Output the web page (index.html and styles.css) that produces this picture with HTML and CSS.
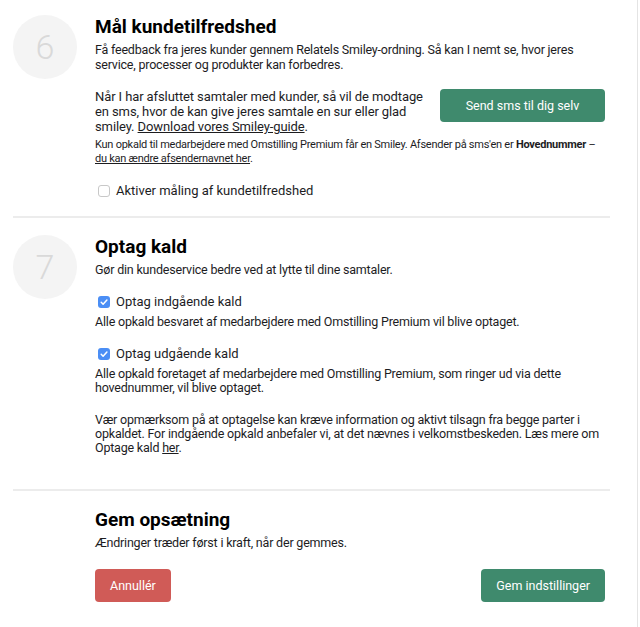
FILE: index.html
```html
<!DOCTYPE html>
<html lang="da">
<head>
    <meta charset="UTF-8">
    <meta name="viewport" content="width=device-width, initial-scale=1.0">
    <title>Indstillinger</title>
    <link rel="stylesheet" href="styles.css">
</head>
<body>
    <div class="page">
        <section class="step">
            <div class="step-num">6</div>
            <div class="step-body">
                <h2>Mål kundetilfredshed</h2>
                <p class="lead">Få feedback fra jeres kunder gennem Relatels Smiley-ordning. Så kan I nemt se, hvor jeres service, processer og produkter kan forbedres.</p>

                <div class="sms-row">
                    <p>Når I har afsluttet samtaler med kunder, så vil de modtage en sms, hvor de kan give jeres samtale en sur eller glad smiley. <a href="#">Download vores Smiley-guide</a>.</p>
                    <button class="btn green">Send sms til dig selv</button>
                </div>

                <p class="note">Kun opkald til medarbejdere med Omstilling Premium får en Smiley. Afsender på sms'en er <strong>Hovednummer</strong> – <a href="#">du kan ændre afsendernavnet her</a>.</p>

                <label class="check">
                    <span class="box"></span>
                    <span>Aktiver måling af kundetilfredshed</span>
                </label>
            </div>
        </section>

        <hr class="divider">

        <section class="step">
            <div class="step-num">7</div>
            <div class="step-body">
                <h2>Optag kald</h2>
                <p class="lead">Gør din kundeservice bedre ved at lytte til dine samtaler.</p>

                <label class="check">
                    <span class="box checked"><svg viewBox="0 0 12 12" width="12" height="12"><path d="M3.2 6.3l1.9 1.9 3.8-4.2" fill="none" stroke="#fff" stroke-width="1.5" stroke-linecap="round" stroke-linejoin="round"/></svg></span>
                    <span>Optag indgående kald</span>
                </label>
                <p class="desc">Alle opkald besvaret af medarbejdere med Omstilling Premium vil blive optaget.</p>

                <label class="check">
                    <span class="box checked"><svg viewBox="0 0 12 12" width="12" height="12"><path d="M3.2 6.3l1.9 1.9 3.8-4.2" fill="none" stroke="#fff" stroke-width="1.5" stroke-linecap="round" stroke-linejoin="round"/></svg></span>
                    <span>Optag udgående kald</span>
                </label>
                <p class="desc">Alle opkald foretaget af medarbejdere med Omstilling Premium, som ringer ud via dette hovednummer, vil blive optaget.</p>

                <p class="desc notice">Vær opmærksom på at optagelse kan kræve information og aktivt tilsagn fra begge parter i opkaldet. For indgående opkald anbefaler vi, at det nævnes i velkomstbeskeden. Læs mere om Optage kald <a href="#">her</a>.</p>
            </div>
        </section>

        <hr class="divider">

        <section class="save">
            <h2>Gem opsætning</h2>
            <p class="lead">Ændringer træder først i kraft, når der gemmes.</p>
            <div class="actions">
                <button class="btn red">Annullér</button>
                <button class="btn green">Gem indstillinger</button>
            </div>
        </section>
    </div>
</body>
</html>
```

FILE: styles.css
```css
* {
    margin: 0;
    padding: 0;
    box-sizing: border-box;
}

body {
    font-family: Roboto, 'Noto Sans', sans-serif;
    color: #1d1d1f;
    background: white;
}

.page {
    width: 638px;
    min-height: 627px;
    border-right: 1px solid #e4e4e4;
    padding: 15px 27px 0 13px;
}

a {
    color: inherit;
}

h2 {
    font-size: 19px;
    font-weight: 700;
    line-height: 24px;
    color: #000;
}

.step {
    display: flex;
    gap: 18px;
}

.step-num {
    flex: none;
    width: 64px;
    height: 64px;
    border-radius: 50%;
    background: #f4f4f4;
    color: #d9d9d9;
    font-size: 34px;
    font-weight: 300;
    display: flex;
    align-items: center;
    justify-content: center;
}

.step-body {
    flex: 1;
    padding-right: 5px;
}

.lead {
    font-size: 12.5px;
    letter-spacing: -0.2px;
    line-height: 15px;
    margin-top: 3px;
}

.sms-row {
    display: flex;
    align-items: flex-start;
    gap: 12px;
    margin-top: 17px;
}

.sms-row p {
    flex: 1;
    font-size: 13px;
    letter-spacing: -0.1px;
    line-height: 15px;
}

.note {
    font-size: 11px;
    letter-spacing: -0.25px;
    line-height: 14px;
    margin-top: 4px;
}

.check {
    display: flex;
    align-items: center;
    gap: 6px;
    font-size: 13px;
    line-height: 17px;
    margin-top: 16px;
    margin-left: 3px;
}

.box {
    width: 12px;
    height: 12px;
    border-radius: 3px;
    border: 1px solid #c8c8c8;
    display: flex;
}

.box.checked {
    background: #4b8ef5;
    border: none;
}

.desc {
    font-size: 12.5px;
    letter-spacing: -0.2px;
    line-height: 14px;
    margin-top: 5px;
}

.notice {
    margin-top: 18px;
    margin-bottom: 17px;
}

.divider {
    border: none;
    border-top: 2px solid #ececec;
    margin: 17px 0;
}

.save {
    padding-left: 82px;
    padding-right: 5px;
}

.actions {
    display: flex;
    justify-content: space-between;
    margin-top: 19px;
}

.btn {
    color: white;
    border: none;
    border-radius: 4px;
    font-family: inherit;
    font-size: 12.5px;
    height: 33px;
    padding: 0 15px;
}

.btn.green {
    background: #3f8a6d;
}

.sms-row .btn {
    flex: none;
    width: 165px;
}

.btn.red {
    background: #d05b57;
}
```
